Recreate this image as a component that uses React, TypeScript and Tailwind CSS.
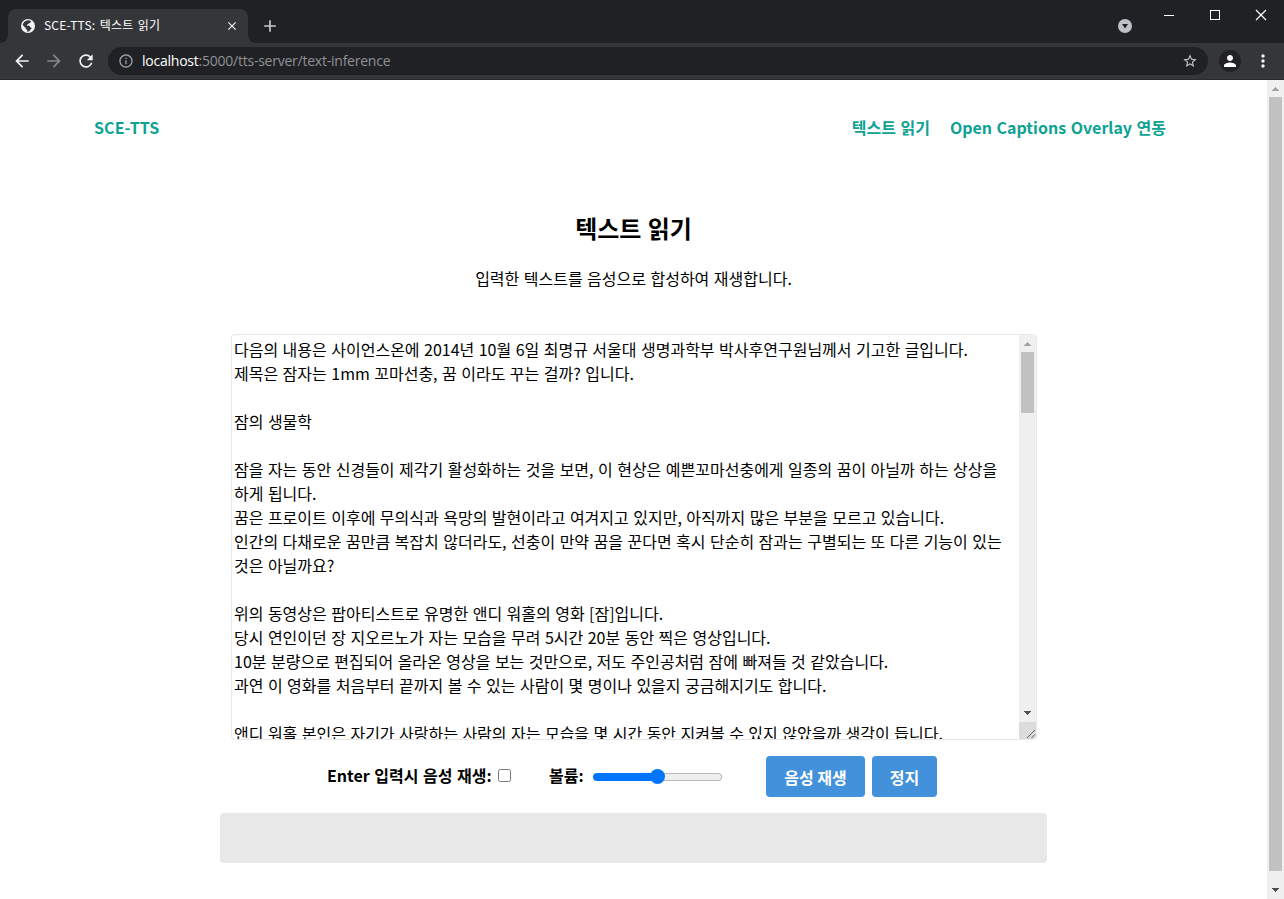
import React from "react";
import {
  MdAdd,
  MdArrowBack,
  MdArrowForward,
  MdClose,
  MdInfoOutline,
  MdMoreVert,
  MdPerson,
  MdRefresh,
  MdStarBorder,
} from "react-icons/md";

const lines: string[] = [
  "다음의 내용은 사이언스온에 2014년 10월 6일 최명규 서울대 생명과학부 박사후연구원님께서 기고한 글입니다.",
  "제목은 잠자는 1mm 꼬마선충, 꿈 이라도 꾸는 걸까? 입니다.",
  "",
  "잠의 생물학",
  "",
  "잠을 자는 동안 신경들이 제각기 활성화하는 것을 보면, 이 현상은 예쁜꼬마선충에게 일종의 꿈이 아닐까 하는 상상을",
  "하게 됩니다.",
  "꿈은 프로이트 이후에 무의식과 욕망의 발현이라고 여겨지고 있지만, 아직까지 많은 부분을 모르고 있습니다.",
  "인간의 다채로운 꿈만큼 복잡치 않더라도, 선충이 만약 꿈을 꾼다면 혹시 단순히 잠과는 구별되는 또 다른 기능이 있는",
  "것은 아닐까요?",
  "",
  "위의 동영상은 팝아티스트로 유명한 앤디 워홀의 영화 [잠]입니다.",
  "당시 연인이던 장 지오르노가 자는 모습을 무려 5시간 20분 동안 찍은 영상입니다.",
  "10분 분량으로 편집되어 올라온 영상을 보는 것만으로, 저도 주인공처럼 잠에 빠져들 것 같았습니다.",
  "과연 이 영화를 처음부터 끝까지 볼 수 있는 사람이 몇 명이나 있을지 궁금해지기도 합니다.",
  "",
  "앤디 워홀 본인은 자기가 사랑하는 사람의 자는 모습을 몇 시간 동안 지켜볼 수 있지 않았을까 생각이 듭니다.",
];

function ScrollArrow({ down = false }: { down?: boolean }) {
  return (
    <svg className="block h-[17px] w-[17px] shrink-0" viewBox="0 0 17 17" shapeRendering="crispEdges">
      {down ? (
        <path d="M5 6h7v1h-1v1h-1v1h-1v1h-1v-1h-1v-1h-1v-1h-1z" fill="#505050" />
      ) : (
        <path d="M8 7h1v1h1v1h1v1h1v1h-7v-1h1v-1h1v-1h1z" fill="#a3a3a3" />
      )}
    </svg>
  );
}

function TabStrip() {
  return (
    <div className="flex h-[43px] bg-[#202124]">
      <svg className="mt-[35px] block h-2 w-2 shrink-0" viewBox="0 0 8 8">
        <path d="M8 0v8H0a8 8 0 0 0 8-8z" fill="#35363a" />
      </svg>
      <div className="mt-[9px] flex h-[34px] w-[240px] items-center rounded-t-lg bg-[#35363a] pl-3">
        <svg className="block h-4 w-4" viewBox="0 0 16 16">
          <circle cx="8" cy="8" r="7" fill="#f1f3f4" />
          <path
            d="M7.2 2.4c1.5-.4 2.8 0 3.9.8-.3 1.1-.9 1.7-2.1 1.9-.2 1-.6 1.3-1.7 1.4-.2.9-.5 1.3-1.4 1.3h2.8c1 0 1.2.7 1.5 1.5 1.2.1 1.8.6 1.3 1.500l-1.100.7c-.4 1.600-1.500 2.200-3.200 2.200v-2c-1.100-.2-1.500-.8-1.500-1.800L2.600 7C3 4.500 4.900 3 7.200 2.400z"
            fill="#35363a"
          />
        </svg>
        <span className="-mt-0.5 ml-2 w-[181px] whitespace-nowrap text-[12px] leading-4 tracking-[0.2px] text-white [word-spacing:1.5px]">
          SCE-TTS: 텍스트 읽기
        </span>
        <MdClose className="h-3.5 w-3.5 text-[#f1f3f4]" />
      </div>
      <svg className="mt-[35px] block h-2 w-2 shrink-0" viewBox="0 0 8 8">
        <path d="M0 0v8h8a8 8 0 0 1-8-8z" fill="#35363a" />
      </svg>
      <MdAdd className="ml-1 mt-4 h-5 w-5 text-[#c8cacd]" />
      <div className="ml-auto flex">
        <svg className="mr-[29px] mt-[19px] block h-3.5 w-3.5" viewBox="0 0 14 14">
          <circle cx="7" cy="7" r="7" fill="#bdc1c6" />
          <path d="M4 5h6L7 9.500z" fill="#202124" />
        </svg>
        <svg className="block h-[30px] w-[123px]" viewBox="0 0 123 30" fill="none" stroke="#fff">
          <path d="M3 15.500h10M49.500 10.500h9v9h-9z" shapeRendering="crispEdges" />
          <path d="M95 10l10 10M105 10L95 20" strokeWidth="1.200" />
        </svg>
      </div>
    </div>
  );
}

function Toolbar() {
  return (
    <div className="flex h-[37px] items-center border-b border-[#28292c] bg-[#35363a] pl-3 pr-[11.5px]">
      <MdArrowBack className="h-5 w-5 text-[#f1f3f4]" />
      <MdArrowForward className="ml-3 h-5 w-5 text-[#85868a]" />
      <MdRefresh className="ml-3 h-5 w-5 text-[#f1f3f4]" />
      <div className="ml-3 flex h-7 w-[1100px] items-center rounded-full bg-[#202124] pl-[10px] pr-[10px]">
        <MdInfoOutline className="h-4 w-4 text-[#9aa0a6]" />
        <span className="ml-2 whitespace-nowrap font-['Open_Sans','Noto_Sans',sans-serif] text-[14px] tracking-[-0.235px] text-[#8f9195]">
          <span className="text-white">localhost</span>:5000/tts-server/text-inference
        </span>
        <MdStarBorder className="ml-auto h-4 w-4 text-[#c8cacd]" />
      </div>
      <div className="ml-[11px] flex h-[22px] w-[22px] items-center justify-center rounded-full bg-[#202124]">
        <MdPerson className="h-[18px] w-[18px] text-white" />
      </div>
      <MdMoreVert className="ml-auto h-5 w-5 text-[#f1f3f4]" />
    </div>
  );
}

function TextBox() {
  return (
    <div className="flex h-[406px] w-[806px] overflow-hidden rounded border border-[#e8e8e8] bg-white">
      <div className="min-w-0 flex-1 overflow-hidden pl-0.5 pt-0.5">
        {lines.map((line, i) => (
          <div key={i} className="h-6 whitespace-pre text-[16px] leading-6">
            {line}
          </div>
        ))}
      </div>
      <div className="flex w-[17px] flex-col bg-[#f0f0f0]">
        <ScrollArrow />
        <div className="mx-0.5 h-[61px] bg-[#c1c1c1]" />
        <div className="flex-1" />
        <ScrollArrow down />
        <svg className="block h-[17px] w-[17px] bg-[#dcdcdc]" viewBox="0 0 17 17">
          <path d="M8 16L16 8M12.500 16L16 12.500" stroke="#505050" strokeWidth="0.900" fill="none" />
        </svg>
      </div>
    </div>
  );
}

function Controls() {
  return (
    <div className="mt-4 flex h-[41px] items-center pl-[327px] font-bold">
      <div className="flex h-[39px] items-center self-start">
        <span className="w-[171px] whitespace-nowrap pb-0.5">Enter 입력시 음성 재생:</span>
        <span className="h-[13px] w-[13px] rounded-[2.500px] border border-[#767676] bg-white" />
        <span className="ml-[38px] w-11 whitespace-nowrap pb-0.5">볼륨:</span>
      </div>
      <div className="flex h-[15px] w-[129px] items-center">
        <div className="-mr-1 h-2 w-[60.5px] rounded-l-full bg-[#0075ff]" />
        <div className="z-10 h-[15px] w-[15px] shrink-0 rounded-full bg-[#0075ff]" />
        <div className="-ml-1 h-2 flex-1 rounded-r-full border border-l-0 border-[#b9b9b9] bg-[#efefef]" />
      </div>
      <button className="ml-11 h-[41px] w-[99px] rounded bg-[#4291da] font-bold text-white [word-spacing:0px]">
        음성 재생
      </button>
      <button className="ml-[7px] h-[41px] w-[65px] rounded bg-[#4291da] font-bold text-white">정지</button>
    </div>
  );
}

export default function App() {
  return (
    <div className="flex h-[899px] w-[1284px] flex-col overflow-hidden bg-white font-['Noto_Sans_CJK_KR',sans-serif] text-[16px] leading-6 text-black [word-spacing:0.88px]">
      <TabStrip />
      <Toolbar />
      <div className="flex flex-1">
        <main className="w-[1267px]">
          <nav className="flex h-[94px] items-center pl-[94px] pr-[101px] font-bold text-[#0ea293]">
            <span className="tracking-[0.1px]">SCE-TTS</span>
            <span className="ml-auto">텍스트 읽기</span>
            <span className="ml-5">Open Captions Overlay 연동</span>
          </nav>
          <h1 className="mt-9 text-center text-[24px] font-bold leading-9">텍스트 읽기</h1>
          <p className="mt-5 text-center">입력한 텍스트를 음성으로 합성하여 재생합니다.</p>
          <div className="mt-11 pl-[231px]">
            <TextBox />
          </div>
          <Controls />
          <div className="ml-[220px] mt-4 h-[50px] w-[827px] rounded bg-[#e8e8e8]" />
        </main>
        <div className="flex w-[17px] flex-col bg-[#f0f0f0]">
          <ScrollArrow />
          <div className="mx-0.5 h-[774px] bg-[#c1c1c1]" />
          <div className="flex-1" />
          <ScrollArrow down />
        </div>
      </div>
    </div>
  );
}
